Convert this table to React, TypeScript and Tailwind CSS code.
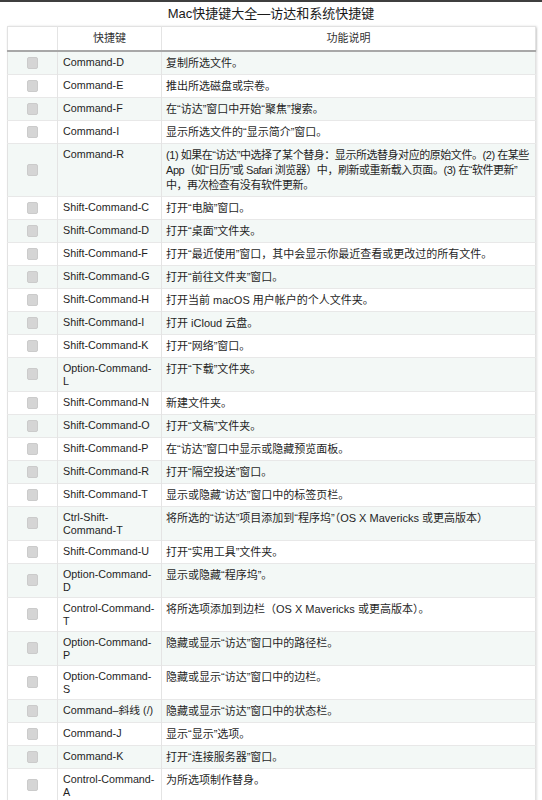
import React from 'react';

interface Shortcut {
  keys: string[];
  desc: string[];
}

const shortcuts: Shortcut[] = [
  { keys: ['Command-D'], desc: ['复制所选文件。'] },
  { keys: ['Command-E'], desc: ['推出所选磁盘或宗卷。'] },
  { keys: ['Command-F'], desc: ['在“访达”窗口中开始“聚焦”搜索。'] },
  { keys: ['Command-I'], desc: ['显示所选文件的“显示简介”窗口。'] },
  {
    keys: ['Command-R'],
    desc: [
      '(1) 如果在“访达”中选择了某个替身：显示所选替身对应的原始文件。(2) 在某些',
      'App（如“日历”或 Safari 浏览器）中，刷新或重新载入页面。(3) 在“软件更新”',
      '中，再次检查有没有软件更新。',
    ],
  },
  { keys: ['Shift-Command-C'], desc: ['打开“电脑”窗口。'] },
  { keys: ['Shift-Command-D'], desc: ['打开“桌面”文件夹。'] },
  { keys: ['Shift-Command-F'], desc: ['打开“最近使用”窗口，其中会显示你最近查看或更改过的所有文件。'] },
  { keys: ['Shift-Command-G'], desc: ['打开“前往文件夹”窗口。'] },
  { keys: ['Shift-Command-H'], desc: ['打开当前 macOS 用户帐户的个人文件夹。'] },
  { keys: ['Shift-Command-I'], desc: ['打开 iCloud 云盘。'] },
  { keys: ['Shift-Command-K'], desc: ['打开“网络”窗口。'] },
  { keys: ['Option-Command-', 'L'], desc: ['打开“下载”文件夹。'] },
  { keys: ['Shift-Command-N'], desc: ['新建文件夹。'] },
  { keys: ['Shift-Command-O'], desc: ['打开“文稿”文件夹。'] },
  { keys: ['Shift-Command-P'], desc: ['在“访达”窗口中显示或隐藏预览面板。'] },
  { keys: ['Shift-Command-R'], desc: ['打开“隔空投送”窗口。'] },
  { keys: ['Shift-Command-T'], desc: ['显示或隐藏“访达”窗口中的标签页栏。'] },
  { keys: ['Ctrl-Shift-', 'Command-T'], desc: ['将所选的“访达”项目添加到“程序坞”（OS X Mavericks 或更高版本）'] },
  { keys: ['Shift-Command-U'], desc: ['打开“实用工具”文件夹。'] },
  { keys: ['Option-Command-', 'D'], desc: ['显示或隐藏“程序坞”。'] },
  { keys: ['Control-Command-', 'T'], desc: ['将所选项添加到边栏（OS X Mavericks 或更高版本）。'] },
  { keys: ['Option-Command-', 'P'], desc: ['隐藏或显示“访达”窗口中的路径栏。'] },
  { keys: ['Option-Command-', 'S'], desc: ['隐藏或显示“访达”窗口中的边栏。'] },
  { keys: ['Command–斜线 (/)'], desc: ['隐藏或显示“访达”窗口中的状态栏。'] },
  { keys: ['Command-J'], desc: ['显示“显示”选项。'] },
  { keys: ['Command-K'], desc: ['打开“连接服务器”窗口。'] },
  { keys: ['Control-Command-', 'A'], desc: ['为所选项制作替身。'] },
];

const font = { fontFamily: '"Liberation Sans", "Noto Sans CJK SC", sans-serif' };

export default function App() {
  return (
    <div className="w-[542px] min-h-[800px] bg-white text-[#1f1f1f]" style={font}>
      <div className="h-[2px] bg-[#3f3f3f]" />
      <h1 className="h-[24px] flex items-center justify-center text-[13px] font-normal text-[#1a1a1a]">
        Mac快捷键大全—访达和系统快捷键
      </h1>
      <div className="pl-[7px]">
        <table className="table-fixed border-collapse w-[528px] text-[10.75px] border border-[#e2e2e2] shadow-[1px_0_2px_rgba(0,0,0,0.12)]">
          <colgroup>
            <col className="w-[50px]" />
            <col className="w-[104px]" />
            <col className="w-[374px]" />
          </colgroup>
          <thead>
            <tr className="h-[24px] border-b-2 border-[#a8a8a8] shadow-[0_1px_2px_rgba(0,0,0,0.25)]">
              <th className="border-r border-[#e4e4e4] font-normal" />
              <th className="border-r border-[#e4e4e4] font-normal text-[11px] text-[#333] text-center">快捷键</th>
              <th className="font-normal text-[11px] text-[#333] text-center">功能说明</th>
            </tr>
          </thead>
          <tbody>
            {shortcuts.map((s, i) => (
              <tr
                key={s.keys.join('')}
                className={`border-b border-[#e8e8e8] ${i % 2 === 0 ? 'bg-[#f3f8f6]' : 'bg-white'}`}
              >
                <td className="border-r border-[#e4e4e4] align-middle">
                  <div className="mx-auto w-[11px] h-[12px] rounded-[2px] bg-[#d5d5d5] border border-[#cbcbcb]" />
                </td>
                <td className="border-r border-[#e4e4e4] align-top pl-[5px] pt-[4px] pb-[3px] leading-[13px] whitespace-nowrap">
                  {s.keys.map((k, j) => (
                    <div key={j}>{k}</div>
                  ))}
                </td>
                <td
                  className={`align-top pl-[4px] pt-[4px] pb-[3px] text-[11px] leading-[15px] whitespace-nowrap ${
                    s.desc.length > 1 ? 'tracking-[-0.45px]' : ''
                  }`}
                >
                  {s.desc.map((d, j) => (
                    <div key={j}>{d}</div>
                  ))}
                </td>
              </tr>
            ))}
          </tbody>
        </table>
      </div>
    </div>
  );
}
